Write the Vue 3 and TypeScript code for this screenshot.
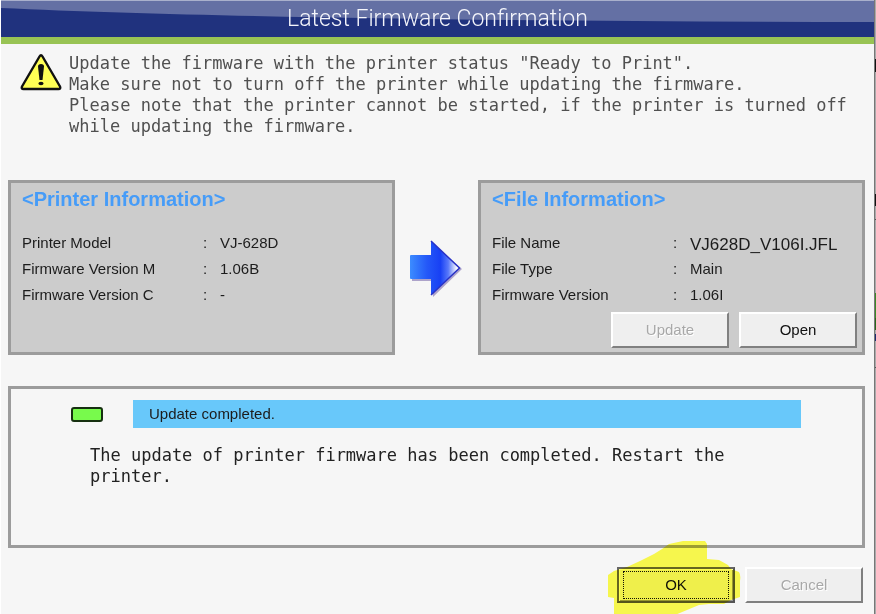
<script setup lang="ts">
interface InfoRow {
  label: string
  value: string
  wide?: boolean
}

const notice: string[] = [
  'Update the firmware with the printer status "Ready to Print".',
  'Make sure not to turn off the printer while updating the firmware.',
  'Please note that the printer cannot be started, if the printer is turned off',
  'while updating the firmware.',
]

const printerInfo: InfoRow[] = [
  { label: 'Printer Model', value: 'VJ-628D' },
  { label: 'Firmware Version M', value: '1.06B' },
  { label: 'Firmware Version C', value: '-' },
]

const fileInfo: InfoRow[] = [
  { label: 'File Name', value: 'VJ628D_V106I.JFL', wide: true },
  { label: 'File Type', value: 'Main' },
  { label: 'Firmware Version', value: '1.06I' },
]
</script>

<template>
  <div class="screen">
    <main class="dialog">
      <header class="titlebar">
        <svg class="gloss" viewBox="0 0 874 36" preserveAspectRatio="none" aria-hidden="true">
          <path d="M0 0H874V21C560 21 220 17 0 7Z" fill="#6470a4" />
        </svg>
        <h1>Latest Firmware Confirmation</h1>
      </header>

      <section class="notice">
        <svg class="warning" viewBox="0 0 44 40" aria-hidden="true">
          <path d="M20.500 3.500Q22 1 23.500 3.500L41 33.500Q42 36 39.500 36H4.500Q2 36 3 33.500Z" fill="#ffff55" stroke="#111" stroke-width="2.400" stroke-linejoin="round" />
          <path d="M19 13.500Q19 11 22 11T25 13.500L23.500 27H20.500Z" fill="#111" />
          <ellipse cx="22" cy="30.500" rx="2.600" ry="1.800" fill="#111" />
        </svg>
        <p>
          <span v-for="line in notice" :key="line" class="line">{{ line }}</span>
        </p>
      </section>

      <div class="transfer">
        <section class="panel">
          <h2>&lt;Printer Information&gt;</h2>
          <dl>
            <template v-for="row in printerInfo" :key="row.label">
              <dt>{{ row.label }}</dt>
              <dd>:</dd>
              <dd>{{ row.value }}</dd>
            </template>
          </dl>
        </section>

        <svg class="arrow" viewBox="0 0 54 60" aria-hidden="true">
          <defs>
            <linearGradient id="arrow-fill" x1="0" x2="1" y1="0" y2="0">
              <stop offset="0" stop-color="#3c8cff" />
              <stop offset="0.350" stop-color="#2458f8" />
              <stop offset="0.620" stop-color="#1840f4" />
              <stop offset="0.780" stop-color="#5878fa" />
              <stop offset="0.960" stop-color="#ffffff" />
            </linearGradient>
          </defs>
          <path d="M2 19H22V5L52 31 23 59 22 43H2Z" fill="#8e80b8" opacity="0.700" />
          <path d="M1 17H21V3L49 30 21 57V41H1Q0 41 0 40V18Q0 17 1 17Z" fill="url(#arrow-fill)" />
          <path d="M21 3 49.500 30 21 57" fill="none" stroke="#2832c8" stroke-width="1.500" />
        </svg>

        <section class="panel">
          <h2>&lt;File Information&gt;</h2>
          <dl>
            <template v-for="row in fileInfo" :key="row.label">
              <dt>{{ row.label }}</dt>
              <dd>:</dd>
              <dd :class="{ wide: row.wide }">{{ row.value }}</dd>
            </template>
          </dl>
          <div class="actions">
            <button type="button" disabled>Update</button>
            <button type="button">Open</button>
          </div>
        </section>
      </div>

      <section class="status">
        <div class="state">
          <span class="lamp"></span>
          <p class="banner">Update completed.</p>
        </div>
        <p class="result">The update of printer firmware has been completed. Restart the printer.</p>
      </section>

      <footer class="footer">
        <div class="marked">
          <button type="button" class="default"><span>OK</span></button>
          <svg class="marker" viewBox="0 0 134 74" aria-hidden="true">
            <path d="M76 0H98L100 3V18L112 19 121 24 124 28 132 31Q134 34 133 40V56L124 59 117 63H102L92 64 80 69 68 74H7V57L1 56V34L7 30 20 26 33 20 47 13 55 8 62 3Z" fill="#ffff50" />
          </svg>
        </div>
        <button type="button" disabled>Cancel</button>
      </footer>
    </main>
    <div class="backdrop"></div>
  </div>
</template>

<style>
body {
  margin: 0;
  background: #f6f6f6;
}
</style>

<style scoped>
.screen {
  display: grid;
  grid-template-columns: minmax(0, 1fr) 2px;
  min-height: 100vh;
  font: 15px/26px "Liberation Sans", Arial, sans-serif;
  color: #1c1c1c;
}

h1,
h2,
p,
dl,
dd {
  margin: 0;
}

.dialog {
  background: #f6f6f6;
  border-left: 1px solid #fff;
}

.backdrop {
  border-left: 1px solid #777;
  background: linear-gradient(
    #aaa 59px, #111 59px 72px, #aaa 72px 194px, #111 194px 206px,
    #aaa 206px 219px, #555 219px 220px, #aaa 220px 293px, #3a8a24 293px 318px,
    #286818 318px 330px, #aaa 330px 334px, #1c2a70 334px 341px,
    #aaa 341px 367px, #555 367px 368px, #aaa 368px
  );
}

.titlebar {
  display: grid;
  height: 36px;
  border-top: 1px solid #a9b0cc;
  border-bottom: 7px solid #98c354;
  background: #20327e;
}

.gloss,
.titlebar h1 {
  grid-area: 1 / 1;
  width: 100%;
  height: 36px;
}

.titlebar h1 {
  font: 300 23px/36px Roboto, "Liberation Sans", sans-serif;
  text-align: center;
  color: #f4f5fb;
}

.notice {
  display: flex;
  padding: 9px 8px 0 18px;
}

.warning {
  flex: none;
  width: 44px;
  height: 40px;
}

.notice p,
.result {
  font: 17px/21px "DejaVu Sans Mono", monospace;
}

.notice p {
  padding-left: 6px;
  color: #505050;
}

.line {
  display: block;
  white-space: nowrap;
}

.transfer {
  display: grid;
  grid-template-columns: minmax(0, 1fr) 83px minmax(0, 1fr);
  margin: 43px 9px 0 7px;
}

.panel {
  box-sizing: border-box;
  padding: 4px 5px 4px 11px;
  border: 3px solid #9c9c9c;
  background: #ccc;
}

.panel h2 {
  font: bold 20px/24px "Liberation Sans", sans-serif;
  color: #469cf8;
}

.panel dl {
  display: grid;
  grid-template-columns: 181px 17px minmax(0, 1fr);
  margin-top: 19px;
  white-space: nowrap;
}

.wide {
  height: 26px;
  font-size: 17px;
  line-height: 30px;
}

.arrow {
  place-self: center;
  width: 54px;
  height: 60px;
}

.actions {
  display: flex;
  justify-content: flex-end;
  gap: 10px;
  margin-top: 4px;
}

button {
  box-sizing: border-box;
  width: 118px;
  height: 36px;
  padding: 0;
  border: 2px solid;
  border-color: #fff #808080 #808080 #fff;
  background: #efefef;
  font: 15px/26px "Liberation Sans", Arial, sans-serif;
  color: #111;
}

button:disabled {
  color: #a8a8a8;
  text-shadow: 1px 1px 0 #fff;
}

.status {
  box-sizing: border-box;
  min-height: 162px;
  margin: 31px 9px 0 7px;
  padding: 11px 61px 0 60px;
  border: 3px solid #9c9c9c;
}

.state {
  display: flex;
  align-items: center;
}

.lamp {
  flex: none;
  box-sizing: border-box;
  width: 32px;
  height: 15px;
  border: 2px solid #163010;
  border-radius: 3px;
  background: #78fa4c;
}

.banner {
  flex: 1;
  margin-left: 30px;
  padding-left: 16px;
  background: #68c8fa;
  line-height: 28px;
}

.result {
  max-width: 650px;
  margin-top: 17px;
  padding-left: 19px;
  color: #222;
}

.footer {
  display: flex;
  justify-content: flex-end;
  gap: 10px;
  padding: 19px 11px 0 0;
}

.marked {
  position: relative;
}

.default {
  display: block;
  padding: 2px;
  border-color: #666 #555 #555 #666;
  box-shadow: inset 1px 1px 0 #fff, inset -1px -1px 0 #999;
}

.default span {
  display: block;
  margin: 0 2px;
  border: 1px dotted #111;
}

.marker {
  position: absolute;
  left: -10px;
  top: -26px;
  width: 134px;
  height: 74px;
  mix-blend-mode: multiply;
  pointer-events: none;
}
</style>
